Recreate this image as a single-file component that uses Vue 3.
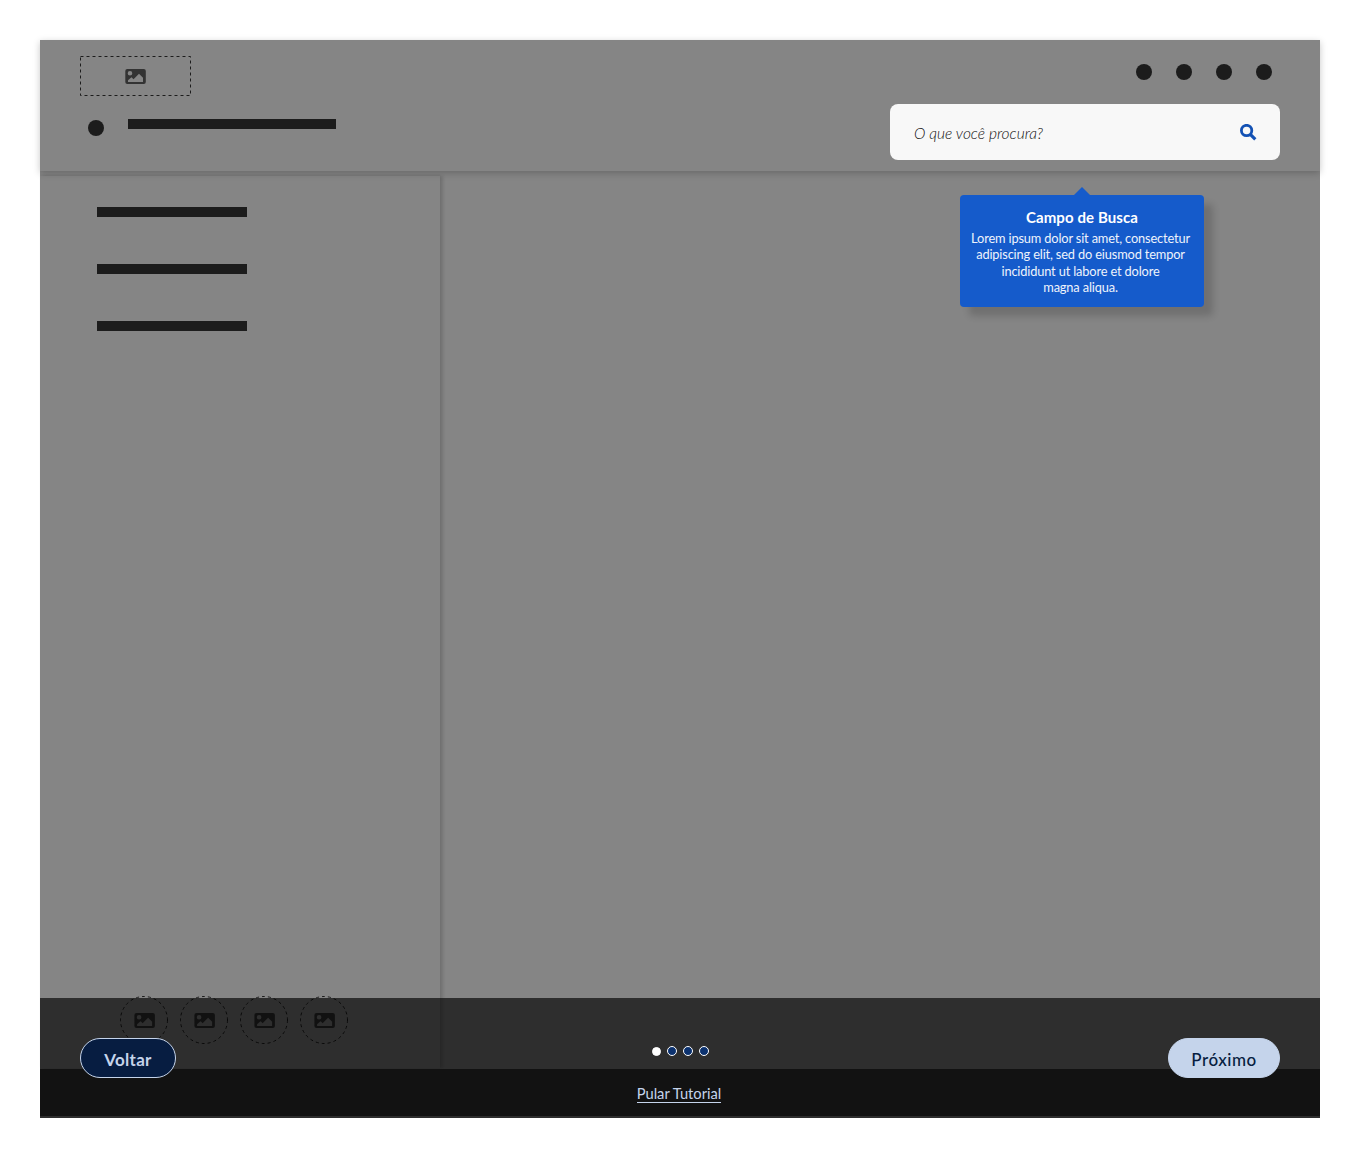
<script setup>
const shortcuts = [1, 2, 3, 4]
const menu = [1, 2, 3]
const steps = [1, 2, 3, 4]
const lines = [
  'Lorem ipsum dolor sit amet, consectetur',
  'adipiscing elit, sed do eiusmod tempor',
  'incididunt ut labore et dolore',
  'magna aliqua.',
]
</script>

<template>
  <main class="screen">
    <header class="header">
      <div class="brand">
        <svg class="logo" width="111" height="40" viewBox="0 0 111 40">
          <rect x=".5" y=".5" width="110" height="39" fill="none" stroke="#1c1c1c" stroke-dasharray="3 3" />
          <path class="picture" transform="translate(45.300 13)" fill-rule="evenodd" d="M2 0h16.500a2 2 0 0 1 2 2v11a2 2 0 0 1-2 2H2a2 2 0 0 1-2-2V2a2 2 0 0 1 2-2zM4.700 2a2.300 2.300 0 1 0 0 4.600A2.300 2.300 0 0 0 4.700 2zM2.700 13h15V8.700l-4-4-5.500 5.500-2-2L2.700 11.300z" />
        </svg>
        <div class="title"><i class="dot"></i><i class="title-bar"></i></div>
      </div>
      <div class="tools">
        <div class="actions"><i v-for="n in shortcuts" :key="n" class="dot"></i></div>
        <div class="search">
          <span class="hint">O que você procura?</span>
          <svg width="17" height="17" viewBox="0 0 17 17" fill="none" stroke="#1351b4">
            <circle cx="6.600" cy="6.500" r="5.200" stroke-width="2.800" />
            <path d="m10.300 10.300 5 5" stroke-width="3.200" />
          </svg>
        </div>
      </div>
    </header>

    <section class="body">
      <aside class="sidebar">
        <div class="menu"><i v-for="n in menu" :key="n" class="menu-bar"></i></div>
        <div class="social">
          <svg v-for="n in shortcuts" :key="n" width="48" height="48" viewBox="0 0 48 48">
            <circle cx="24" cy="24" r="23.500" fill="none" stroke="#1c1c1c" stroke-dasharray="3 3" />
            <path class="picture" transform="translate(14.400 17)" fill-rule="evenodd" d="M2 0h16.500a2 2 0 0 1 2 2v11a2 2 0 0 1-2 2H2a2 2 0 0 1-2-2V2a2 2 0 0 1 2-2zM4.700 2a2.300 2.300 0 1 0 0 4.600A2.300 2.300 0 0 0 4.700 2zM2.700 13h15V8.700l-4-4-5.500 5.500-2-2L2.700 11.300z" />
          </svg>
        </div>
      </aside>
    </section>
    <footer class="footer"></footer>

    <div class="tooltip">
      <svg class="arrow" width="18" height="9" viewBox="0 0 18 9"><path d="M0 9 9 0l9 9z" fill="#155bcb" /></svg>
      <h2>Campo de Busca</h2>
      <p v-for="(line, i) in lines" :key="i" class="line">{{ line }}</p>
    </div>

    <nav class="controls">
      <button class="button back"><span>Voltar</span></button>
      <div class="progress">
        <div class="steps"><i v-for="n in steps" :key="n" class="step" :class="{ current: n === 1 }"></i></div>
        <a class="skip">Pular Tutorial</a>
      </div>
      <button class="button next"><span>Próximo</span></button>
    </nav>
  </main>
</template>

<style>
body { background: #fff; }
</style>

<style scoped>
* { box-sizing: border-box; }
.screen { position: relative; display: flex; flex-direction: column; width: 1280px; height: 1078px; margin: 40px; background: #858585; font-family: Lato, "Open Sans", sans-serif; }
.header { position: relative; display: flex; justify-content: space-between; height: 131px; padding: 16px 40px 0; background: #858585; box-shadow: 0 2px 7px rgba(0, 0, 0, .22); flex: none; }
.logo { display: block; }
.picture { fill: #333; }
.title { display: flex; align-items: flex-start; gap: 24px; padding: 23px 0 0 8px; }
.title .dot { margin-top: 1px; }
.dot { display: block; width: 16px; height: 16px; border-radius: 50%; background: #1c1c1c; }
.title-bar { width: 208px; height: 10px; background: #1c1c1c; }
.actions { display: flex; justify-content: flex-end; gap: 24px; padding: 8px 8px 24px 0; }
.search { display: flex; align-items: center; justify-content: space-between; width: 390px; height: 56px; padding: 0 23px 0 24px; border-radius: 8px; background: #f8f8f8; }
.hint { padding-top: 2px; font-size: 15.500px; font-style: italic; font-weight: 300; line-height: 20px; color: #111; }
.body { flex: 1; padding-top: 5px; }
.sidebar { display: flex; flex-direction: column; justify-content: space-between; width: 400px; height: 892px; padding: 31px 57px 24px; box-shadow: 3px 0 3px rgba(0, 0, 0, .14), 0 -1px 2px rgba(0, 0, 0, .04); }
.menu { display: flex; flex-direction: column; gap: 47px; }
.menu-bar { width: 150px; height: 10px; background: #1c1c1c; }
.social { display: flex; gap: 12px; margin-left: 23px; }
.footer { height: 47px; margin-bottom: 2px; background: #363636; }
.tooltip { position: absolute; left: 920px; top: 155px; width: 244px; height: 112px; padding-top: 12px; border-radius: 4px; background: #155bcb; color: #fff; text-align: center; box-shadow: 9px 9px 7px rgba(0, 0, 0, .16); }
.arrow { position: absolute; left: 113px; top: -8px; }
h2 { margin: 0 0 3px; font-size: 15px; font-weight: 700; line-height: 20px; letter-spacing: .1px; }
.line { margin: 0; padding-right: 3px; font-size: 12.800px; line-height: 16.300px; letter-spacing: -.15px; white-space: nowrap; color: #eef3fc; }
.controls { position: absolute; left: 0; right: 0; bottom: 0; display: flex; justify-content: space-between; height: 120px; padding: 40px 40px 0; background: rgba(0, 0, 0, .65); }
.button { height: 40px; padding: 3px 0 0; border: 1px solid #c5d4eb; border-radius: 20px; font-family: inherit; font-size: 17px; line-height: 20px; }
.back { width: 96px; background: #071d41; color: #c5d4eb; font-weight: 700; letter-spacing: .3px; }
.next { width: 112px; background: #c5d4eb; color: #071d41; font-weight: 500; letter-spacing: .5px; }
.progress { display: flex; flex-direction: column; align-items: center; width: 100px; margin-left: 16px; padding-top: 8px; }
.steps { display: flex; align-items: center; gap: 6px; margin-left: 1px; }
.step { width: 10px; height: 10px; border: 1.500px solid #fff; border-radius: 50%; background: #0c326f; }
.step.current { width: 9px; height: 9px; background: #fff; }
.skip { margin: 29px 2px 0 0; border-bottom: 1px solid #c5d4eb; color: #c5d4eb; font-size: 14.700px; line-height: 17px; white-space: nowrap; }
</style>
